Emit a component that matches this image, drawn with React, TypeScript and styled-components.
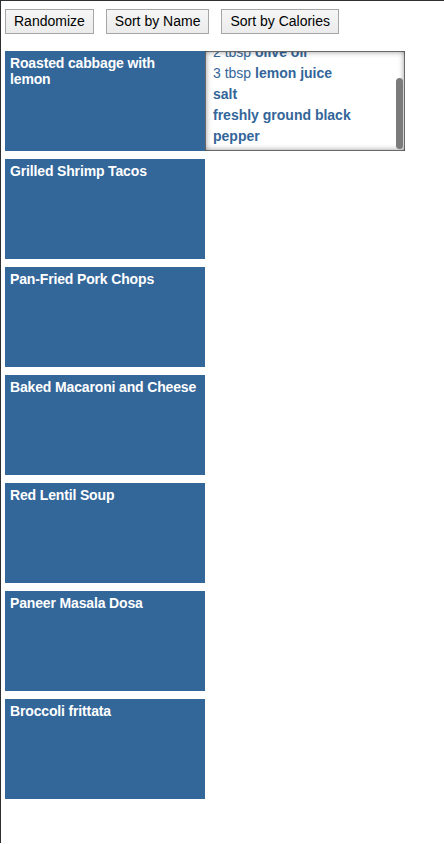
import React, { useEffect, useRef } from "react";
import styled, { createGlobalStyle } from "styled-components";

const Global = createGlobalStyle`
  html, body { margin: 0; padding: 0; background: #fff; }
  body { font-family: "Liberation Sans", Arial, Helvetica, sans-serif; font-size: 14px; }
`;

const Page = styled.div`
  min-height: 843px;
  border-top: 1px solid #2e3133;
  border-left: 1px solid #2e3133;
  padding: 8px 4px 0 4px;
  box-sizing: border-box;
`;

const Toolbar = styled.div`
  display: flex;
  gap: 12px;
  margin-bottom: 17px;
`;

const Button = styled.button`
  height: 25px;
  padding: 0 8px;
  border: 1px solid #a6a6a6;
  border-radius: 0;
  background: linear-gradient(#f6f6f6, #ebebeb);
  font-family: "Liberation Sans", Arial, Helvetica, sans-serif;
  font-size: 14px;
  color: #000;
  line-height: 23px;
`;

const List = styled.div`
  display: flex;
  flex-direction: column;
  gap: 8px;
`;

const Row = styled.div`
  display: flex;
  align-items: stretch;
`;

const Card = styled.div`
  width: 200px;
  height: 100px;
  box-sizing: border-box;
  padding: 4px 0 0 5px;
  background: #336699;
  color: #fff;
  font-weight: bold;
  font-size: 14px;
  line-height: 16px;
  letter-spacing: -0.15px;
  white-space: pre-line;
  flex: none;
`;

const PanelWrap = styled.div`
  position: relative;
  width: 200px;
  height: 100px;
  flex: none;
`;

const Ingredients = styled.div`
  width: 200px;
  height: 100px;
  box-sizing: border-box;
  border: 1px solid #8a8a8a;
  background: #fff;
  overflow-y: scroll;
  scrollbar-width: none;
  padding: 5px 19px 3px 7px;
  color: #336699;
  font-size: 14px;
  line-height: 21px;
  &::-webkit-scrollbar { display: none; }
`;

const Shade = styled.div`
  position: absolute;
  inset: 0;
  pointer-events: none;
  box-shadow: inset 0 0 6px rgba(0, 0, 0, 0.55);
`;

const Thumb = styled.div`
  position: absolute;
  right: 2px;
  top: 27px;
  width: 7px;
  height: 71px;
  border-radius: 4px;
  background: #7b7b7b;
`;

const Item = styled.div``;

const Name = styled.b`
  font-weight: bold;
`;

const recipes = [
  "Roasted cabbage with\nlemon",
  "Grilled Shrimp Tacos",
  "Pan-Fried Pork Chops",
  "Baked Macaroni and Cheese",
  "Red Lentil Soup",
  "Paneer Masala Dosa",
  "Broccoli frittata",
];

const ingredients: [string, string][] = [
  ["1 head", "green cabbage"],
  ["2 tbsp", "olive oil"],
  ["3 tbsp", "lemon juice"],
  ["", "salt"],
  ["", "freshly ground black pepper"],
];

export default function App() {
  const ref = useRef<HTMLDivElement>(null);
  useEffect(() => {
    if (ref.current) ref.current.scrollTop = ref.current.scrollHeight;
  }, []);
  return (
    <>
      <Global />
      <Page>
        <Toolbar>
          <Button>Randomize</Button>
          <Button>Sort by Name</Button>
          <Button>Sort by Calories</Button>
        </Toolbar>
        <List>
          {recipes.map((r, i) => (
            <Row key={r}>
              <Card>{r}</Card>
              {i === 0 && (
                <PanelWrap>
                  <Ingredients ref={ref}>
                    {ingredients.map(([q, n]) => (
                      <Item key={n}>
                        {q ? q + " " : ""}
                        <Name>{n}</Name>
                      </Item>
                    ))}
                  </Ingredients>
                  <Shade />
                  <Thumb />
                </PanelWrap>
              )}
            </Row>
          ))}
        </List>
      </Page>
    </>
  );
}
